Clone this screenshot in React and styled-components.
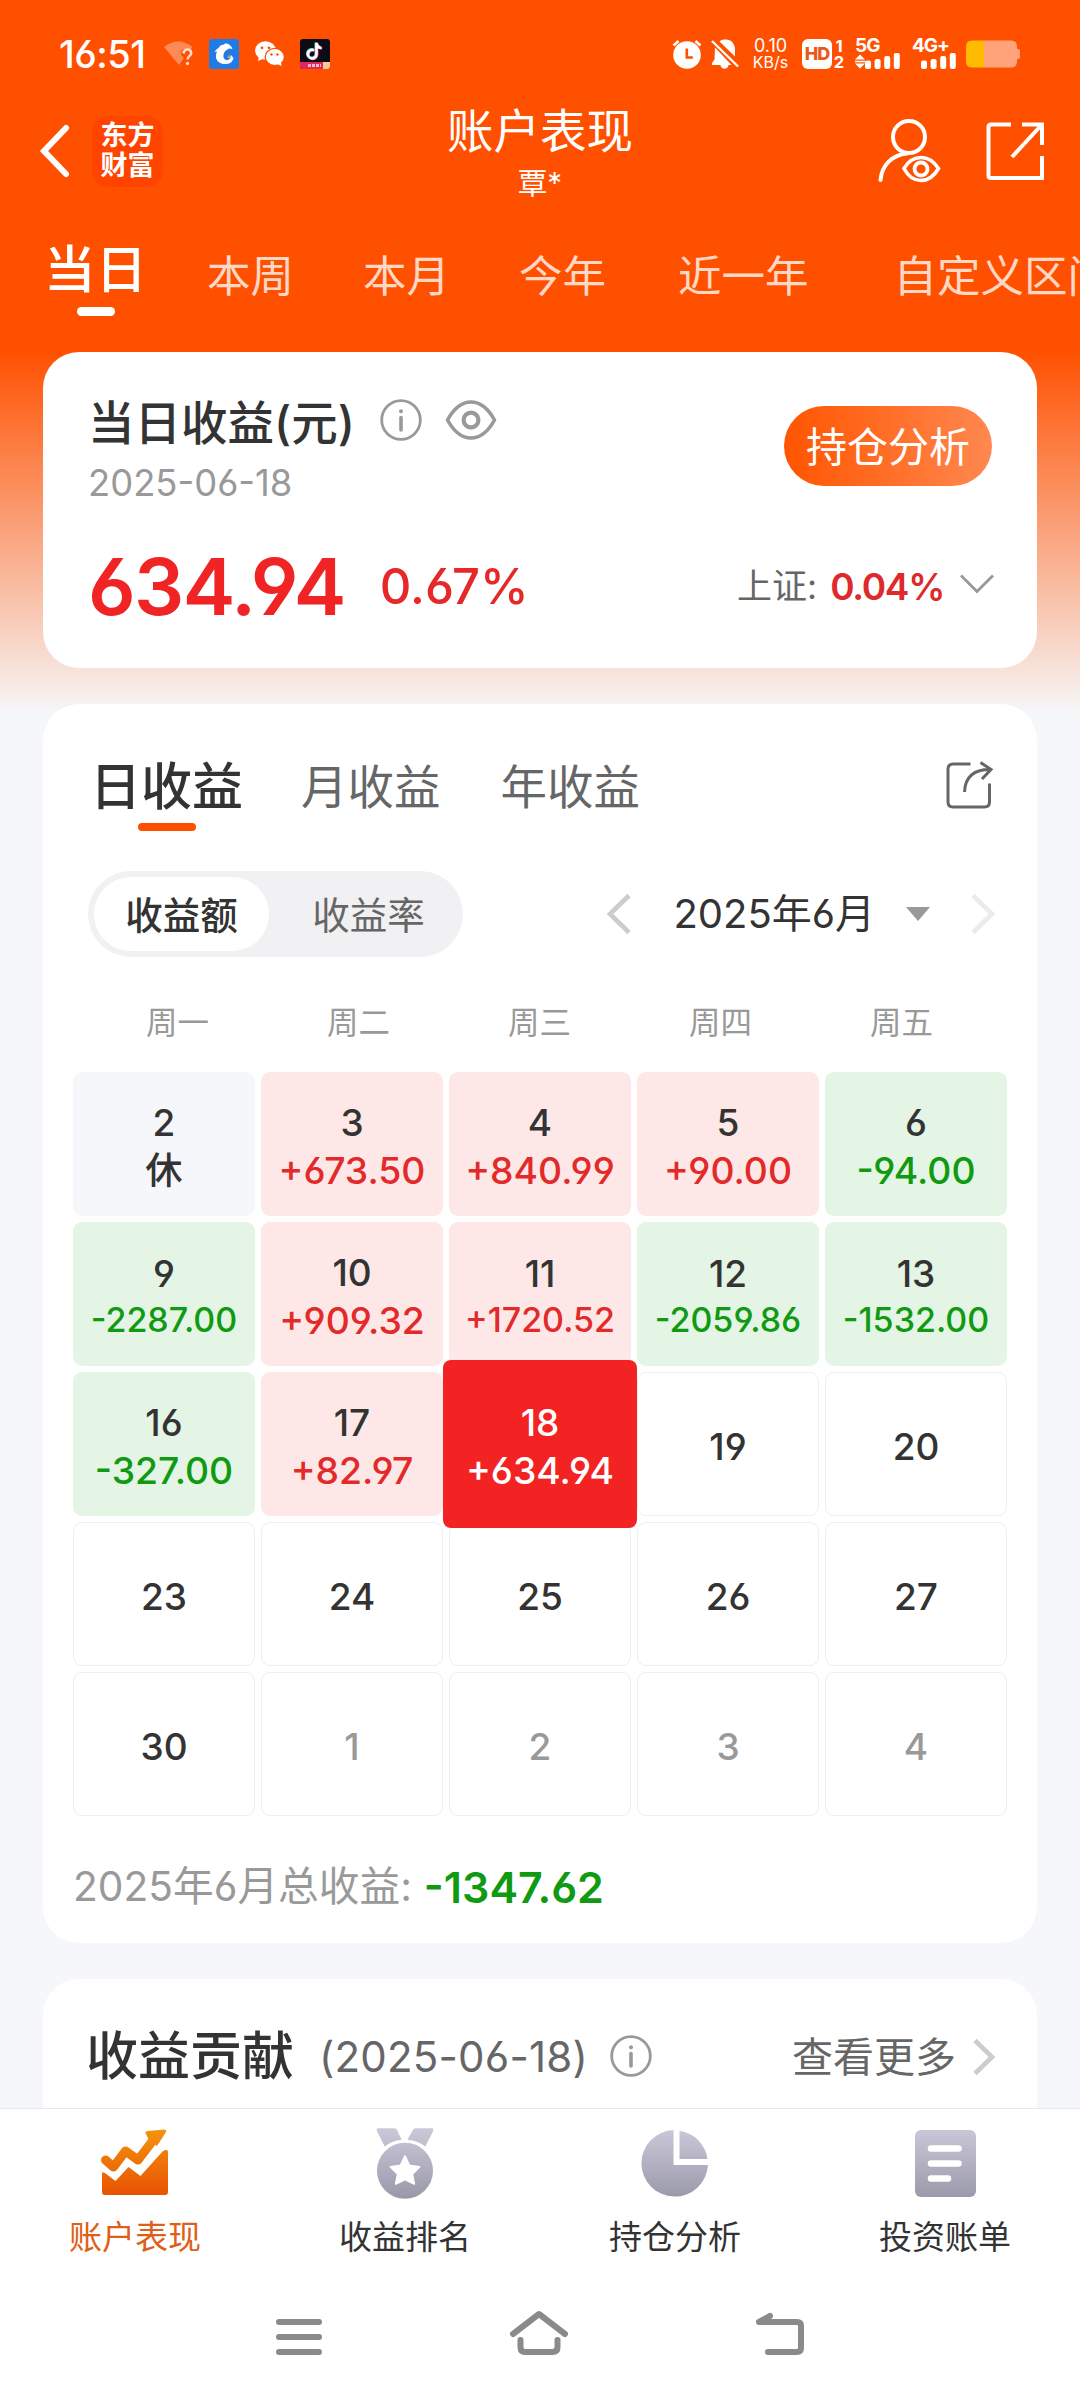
import React from "react";
import styled, { createGlobalStyle, css } from "styled-components";

const GlobalStyle = createGlobalStyle`
  * { box-sizing: border-box; }
  body {
    margin: 0;
    font-family: Inter, "Noto Sans CJK SC", sans-serif;
    font-feature-settings: "cv03", "cv04";
    color: #333;
  }
  svg { display: block; flex: none; overflow: visible; }
`;

const Page = styled.div`
  width: 1080px;
  height: 2400px;
  display: flex;
  flex-direction: column;
  overflow: hidden;
  background: linear-gradient(#ff5000 0, #ff5000 350px, #f6f7fa 716px);
`;

const Text = styled.span`
  display: block;
  white-space: nowrap;
  font-size: ${(p) => p.$size}px;
  line-height: ${(p) => p.$line || p.$size}px;
  font-weight: ${(p) => p.$weight || 400};
  color: ${(p) => p.$color || "inherit"};
  letter-spacing: ${(p) => p.$space || 0}px;
  margin-left: ${(p) => p.$left || 0}px;
`;

/* ---------- status bar ---------- */
const StatusBar = styled.div`
  height: 108px;
  padding: 0 60px 0 59px;
  display: flex;
  align-items: center;
  justify-content: space-between;
  color: #fff;
`;
const StatusGroup = styled.div`
  display: flex;
  align-items: center;
  height: 30px;
`;
const SpeedBox = styled.div`
  width: 37px;
  margin: 0 13px 0 13px;
  display: flex;
  flex-direction: column;
  align-items: center;
`;
const HdBox = styled.div`
  width: 30px;
  height: 30px;
  border-radius: 6px;
  background: #fff;
  color: #e85a1c;
  display: flex;
  align-items: center;
  justify-content: center;
`;
const SimNumbers = styled.div`
  width: 14px;
  margin-right: 9px;
  display: flex;
  flex-direction: column;
  align-items: center;
`;
const SignalBox = styled.div`
  width: ${(p) => p.$width}px;
  height: 30px;
  display: flex;
  flex-direction: column;
  justify-content: space-between;
`;

/* ---------- nav bar ---------- */
const NavBar = styled.div`
  height: 98px;
  display: grid;
  grid-template-columns: 1fr 300px 1fr;
  color: #fff;
`;
const NavSide = styled.div`
  height: 86px;
  display: flex;
  align-items: center;
  justify-content: ${(p) => (p.$right ? "flex-end" : "flex-start")};
  gap: ${(p) => (p.$right ? 46 : 22)}px;
  padding: ${(p) => (p.$right ? "0 36px 0 0" : "0 0 0 40px")};
`;
const NavTitle = styled.div`
  display: flex;
  flex-direction: column;
  align-items: center;
`;
const Logo = styled.div`
  width: 71px;
  height: 71px;
  border-radius: 16px;
  background: #ff4400;
  display: flex;
  flex-direction: column;
  align-items: center;
  justify-content: center;
`;

const RangeTabs = styled.div`
  height: 146px;
  display: flex;
  padding-left: 44px;
  overflow: hidden;
  color: #ffd8c5;
`;
const RangeTab = styled.div`
  flex: none;
  margin-right: ${(p) => p.$gap}px;
  padding-top: ${(p) => (p.$active ? 37 : 44)}px;
  display: flex;
  flex-direction: column;
  align-items: center;
  ${(p) => p.$active && css`color: #fff;`}
`;
const Underline = styled.i`
  width: ${(p) => p.$width}px;
  height: ${(p) => p.$height}px;
  border-radius: 5px;
  background: ${(p) => p.$color};
  margin-top: ${(p) => p.$top}px;
`;

/* ---------- cards ---------- */
const Main = styled.div`
  flex: 1;
  min-height: 0;
  overflow: hidden;
  padding: 0 43px;
  display: flex;
  flex-direction: column;
  gap: 36px;
`;
const Card = styled.section`
  flex: none;
  height: ${(p) => p.$height}px;
  background: #fff;
  border-radius: 36px;
  padding: ${(p) => p.$pad};
`;
const Row = styled.div`
  display: flex;
  align-items: ${(p) => p.$align || "center"};
  justify-content: ${(p) => (p.$between ? "space-between" : "flex-start")};
  height: ${(p) => p.$height}px;
  gap: ${(p) => p.$gap || 0}px;
  padding: ${(p) => p.$pad || 0};
`;
const Stack = styled.div`
  display: flex;
  flex-direction: column;
`;
const PillButton = styled.button`
  width: 208px;
  height: 80px;
  padding: 2px 0 0;
  border: 0;
  border-radius: 40px;
  margin-top: 10px;
  background: linear-gradient(90deg, #ff5500, #ff8850);
  color: #fff;
  font-family: inherit;
  display: flex;
  align-items: center;
  justify-content: center;
`;

const ProfitTab = styled.div`
  display: flex;
  flex-direction: column;
  align-items: center;
  margin-right: ${(p) => p.$gap}px;
  color: ${(p) => (p.$active ? "#333" : "#666")};
`;
const Segment = styled.div`
  width: 375px;
  height: 86px;
  padding: 6px;
  border-radius: 43px;
  background: #f1f1f4;
  display: flex;
`;
const SegmentItem = styled.div`
  flex: none;
  width: ${(p) => (p.$active ? 175 : 199)}px;
  padding-top: 3px;
  border-radius: 37px;
  display: flex;
  align-items: center;
  justify-content: center;
  background: ${(p) => (p.$active ? "#fff" : "transparent")};
  color: ${(p) => (p.$active ? "#333" : "#666")};
`;
const WeekRow = styled.div`
  height: 115px;
  padding: 49px 15px 0 14px;
  display: grid;
  grid-template-columns: repeat(5, 1fr);
  justify-items: center;
  color: #999;
`;
const Calendar = styled.div`
  display: grid;
  grid-template-columns: repeat(5, 182px);
  grid-auto-rows: 144px;
  gap: 6px;
`;

const cellKinds = {
  rest: css`background: #f6f7fa;`,
  up: css`background: #fde8e7; --amount: #e22a2a;`,
  down: css`background: #e4f4e5; --amount: #109a12;`,
  none: css`border: 1px solid #eee;`,
  other: css`border: 1px solid #eee; color: #999;`,
  today: css`
    background: #f32323;
    color: #fff;
    --amount: #fff;
    margin: -12px -6px;
    z-index: 1;
    border-radius: 8px;
  `,
};
const Cell = styled.div`
  border-radius: 9px;
  padding-top: 5px;
  display: flex;
  flex-direction: column;
  align-items: center;
  justify-content: center;
  color: #333;
  ${(p) => cellKinds[p.$kind]}
`;
const Amount = styled(Text)`
  color: var(--amount, #333);
`;

/* ---------- bottom ---------- */
const BottomTabs = styled.nav`
  height: 172px;
  flex: none;
  background: #fff;
  border-top: 1px solid #e9e9eb;
  display: grid;
  grid-template-columns: repeat(4, 1fr);
`;
const BottomTab = styled.div`
  display: flex;
  flex-direction: column;
  align-items: center;
  padding-top: 17px;
  color: ${(p) => (p.$active ? "#df5f18" : "#333")};
`;
const SystemBar = styled.div`
  height: 120px;
  flex: none;
  background: #fff;
  display: flex;
  justify-content: center;
  padding-top: 30px;
  gap: 188px;
`;

const Chevron = ({ w, h, d, color, stroke, cap = "butt" }) => (
  <svg width={w} height={h} viewBox={`0 0 ${w} ${h}`} fill="none" stroke={color} strokeWidth={stroke} strokeLinecap={cap}>
    <path d={d} />
  </svg>
);

const InfoIcon = () => (
  <svg width="42" height="42" viewBox="0 0 42 42" fill="none" stroke="#999" strokeWidth="2.8">
    <circle cx="21" cy="21" r="19.3" />
    <path d="M21 18.5V31" strokeWidth="3.6" strokeLinecap="round" />
    <circle cx="21" cy="12.3" r="2" fill="#999" stroke="none" />
  </svg>
);

const EyeIcon = () => (
  <svg width="52" height="40" viewBox="0 0 52 40" fill="none" stroke="#999" strokeWidth="3.6">
    <path d="M2.5 20C8 10 16 2 26 2s18 8 23.500 18C44 30 36 38 26 38S8 30 2.500 20Z" strokeLinejoin="round" />
    <circle cx="26" cy="20" r="7.400" strokeWidth="4.200" />
  </svg>
);

const WifiIcon = () => (
  <svg width="29" height="26" viewBox="0 0 29 26">
    <path d="M0 6Q14 -5 28.500 6L26 9Q17 5 17 14L20 17L15 24Z" fill="#ff8a57" />
    <path d="M19.500 12.500q.5-4 4-4t3.700 3.700c0 2.500-3.700 3-3.700 6.300" fill="none" stroke="#ffd9c6" strokeWidth="2.600" />
    <circle cx="23.500" cy="22.500" r="1.700" fill="#ffd9c6" />
  </svg>
);

const DolphinIcon = () => (
  <svg width="30" height="30" viewBox="0 0 30 30">
    <rect width="30" height="30" rx="3" fill="#217be6" />
    <path d="M23.500 10L20 9.500Q16 11.500 15 14Q13.500 18 15.500 20Q18 22.500 21 19.500L22 16L24.500 19Q23.500 24.500 17.500 25Q9 25.500 7 19Q6.500 15 8 12.500L5.500 13Q7 10 10 8.500Q10.500 6 15 5.500L16 4.500Q21 4 23.500 10Z" fill="#fff" />
    <path d="M18 18.500l2.500-3 1 4z" fill="#d59a72" />
  </svg>
);

const WechatIcon = () => (
  <svg width="29" height="26" viewBox="0 0 29 26">
    <ellipse cx="10.500" cy="9.500" rx="10.500" ry="9.300" fill="#fff" />
    <path d="M4 15l-1 5 6-2.500z" fill="#fff" />
    <ellipse cx="19.800" cy="16" rx="9.600" ry="8.600" fill="#fff" stroke="#ff5000" strokeWidth="1.300" />
    <path d="M22 23l4.500 2-.7-4.500z" fill="#fff" />
    <g fill="#ff5000">
      <circle cx="7" cy="6.800" r="1.400" />
      <circle cx="14" cy="6.800" r="1.400" />
      <circle cx="16.500" cy="13.500" r="1.200" />
      <circle cx="22.500" cy="13.500" r="1.200" />
    </g>
  </svg>
);

const TiktokIcon = () => (
  <svg width="30" height="30" viewBox="0 0 30 30">
    <rect width="30" height="30" rx="3" fill="#0c0b16" />
    <path d="M0 23h30v4q0 3-3 3H3q-3 0-3-3z" fill="#e0275a" />
    <path d="M23 23h7v4q0 3-3 3h-4z" fill="#f6c99a" />
    <path d="M8 26.500h13" stroke="#f7b9cc" strokeWidth="3" strokeDasharray="3 1" />
    <g fill="none" strokeWidth="2.600">
      <path d="M13.300 10.700a4.300 4.300 0 1 0 2.500 4V3.500q.5 4.500 5 5" stroke="#3be3e0" />
      <path d="M14.700 11.700a4.300 4.300 0 1 0 2.500 4V4.500q.5 4.500 5 5" stroke="#f7446e" />
      <path d="M14 11.200a4.300 4.300 0 1 0 2.500 4V4q.5 4.500 5 5" stroke="#fff" />
    </g>
  </svg>
);

const AlarmIcon = () => (
  <svg width="30" height="30" viewBox="0 0 30 30">
    <circle cx="15" cy="16" r="13.800" fill="#fff" />
    <path d="M1.500 6.500l5-4.500M28.500 6.500l-5-4.500" stroke="#fff" strokeWidth="2.600" />
    <path d="M14.800 9.500v9h6" stroke="#ff5000" strokeWidth="2.600" fill="none" />
  </svg>
);

const BellOffIcon = () => (
  <svg width="28" height="30" viewBox="0 0 28 30">
    <path d="M8.500 2.500C10 1 11.500 .5 15 .5c5 0 9 4 9 10v7zM4 8.500L20.500 26H17.500c-.5 5-7.500 5-8 0H1v-2l2.500-3.500z" fill="#fff" />
    <path d="M1 2l26 25.500" stroke="#fff" strokeWidth="2.400" />
  </svg>
);

const Bars = ({ arrows }) => (
  <svg width={arrows ? 45 : 35} height="16" viewBox={arrows ? "-10 0 45 16" : "0 0 35 16"} fill="#fff">
    {arrows && <path d="M-10 6.500l5-5 5 5zM-10 10.500l5 5 5-5zM-10 7.800h10v1.500h-10z" />}
    <rect x="0" y="7.500" width="6" height="8.500" rx="2" />
    <rect x="9.600" y="6" width="6" height="10" rx="2" />
    <rect x="19.200" y="3" width="6" height="13" rx="2" />
    <rect x="28.800" y="0" width="6" height="16" rx="2" />
  </svg>
);

const BatteryIcon = () => (
  <svg width="54" height="28" viewBox="0 0 54 28">
    <path d="M18 0.500h27q6 0 6 6v2.500h1q2 0 2 2v6q0 2-2 2h-1v2.500q0 6-6 6H18z" fill="#ffa37b" />
    <path d="M18 .5H6q-6 0-6 6v15q0 6 6 6h12z" fill="#ffbb00" />
  </svg>
);

const UserEyeIcon = () => (
  <svg width="63" height="64" viewBox="0 0 63 64" fill="none" stroke="#fff" strokeWidth="4">
    <circle cx="32" cy="18" r="16" />
    <path d="M30 34.500C15 36 5 46 3.500 61" strokeLinecap="round" />
    <path d="M27 49.500C32 41 38 38.500 44 38.500S56 41 61.500 49.500C56 59 50 61.500 44 61.500S32 59 27 49.500Z" fill="#ff5000" strokeWidth="3.600" />
    <circle cx="44" cy="50" r="6.500" strokeWidth="3.800" />
  </svg>
);

const OpenIcon = () => (
  <svg width="58" height="60" viewBox="0 0 58 60" fill="none" stroke="#fff" strokeWidth="4">
    <path d="M25 3.500H5Q2.500 3.500 2.500 6V54.500Q2.500 57 5 57H56V35" />
    <path d="M36 3.500H56V24M55 4.500L26 36" />
  </svg>
);

const ShareIcon = () => (
  <svg width="46" height="48" viewBox="0 0 46 48" fill="none" stroke="#666" strokeWidth="3">
    <path d="M24.500 3H7Q2 3 2 8V41Q2 46 7 46H38.500Q43.500 46 43.500 41V22.500" />
    <path d="M18.500 31C19 17 27 8.500 44 8.500M34.500 1.500L45 8.500L36 18" />
  </svg>
);

const ChartTabIcon = () => (
  <svg width="68" height="76" viewBox="0 0 68 76">
    <defs>
      <linearGradient id="hot" gradientUnits="userSpaceOnUse" x1="0" y1="4" x2="0" y2="70">
        <stop stopColor="#f4930c" />
        <stop offset="1" stopColor="#e85204" />
      </linearGradient>
    </defs>
    <path d="M4.500 34L12.500 41L24.500 25L37 34L53 13" fill="none" stroke="url(#hot)" strokeWidth="9" strokeLinejoin="round" strokeLinecap="round" />
    <path d="M45 8Q43 5.500 47 5L63 3.500Q66 3.500 65 6L56 20L48 14Z" fill="url(#hot)" />
    <path d="M1 48Q1 45 4 47L14.500 55L27.500 41L39.500 50L61 26Q67 21 67 27V66Q67 69 64 69H4Q1 69 1 66Z" fill="url(#hot)" />
  </svg>
);

const coolFill = (id) => (
  <defs>
    <linearGradient id={id} gradientUnits="userSpaceOnUse" x1="0" y1="0" x2="0" y2="74">
      <stop stopColor="#cccada" />
      <stop offset="1" stopColor="#9998a9" />
    </linearGradient>
  </defs>
);

const MedalTabIcon = () => (
  <svg width="58" height="76" viewBox="0 0 60 76">
    {coolFill("cool1")}
    <path d="M2 1H19Q21 1 22 3L26.500 13Q16 14 9 20L1 4Q0 1 2 1ZM58 1H41Q39 1 38 3L32.500 13Q44 14 51 20L59 4Q60 1 58 1Z" fill="url(#cool1)" />
    <circle cx="30" cy="45" r="29" fill="url(#cool1)" />
    <path d="M30 30L34.500 39.500L45 41L37.500 48.500L39.500 58.500L30 54L20.500 58.500L22.500 48.500L15 41L25.500 39.500Z" fill="#fff" stroke="#fff" strokeWidth="2" strokeLinejoin="round" />
  </svg>
);

const PieTabIcon = () => (
  <svg width="68" height="76" viewBox="0 0 68 76">
    {coolFill("cool2")}
    <path d="M32.500 4A33.300 33.300 0 1 0 67 39H32.500Z" fill="url(#cool2)" />
    <path d="M38.500 4.800A33 33 0 0 1 66.500 33H38.500Z" fill="url(#cool2)" />
  </svg>
);

const BillTabIcon = () => (
  <svg width="61" height="76" viewBox="0 0 61 76">
    {coolFill("cool3")}
    <rect x="0" y="4" width="61" height="67" rx="6" fill="url(#cool3)" />
    <path d="M16 22.500H43.500M16 37.500H43.500M16 52.500H33" stroke="#fff" strokeWidth="6.500" strokeLinecap="round" />
  </svg>
);

const ranges = [
  { name: "当日", gap: 60, active: true },
  { name: "本周", gap: 69 },
  { name: "本月", gap: 69 },
  { name: "今年", gap: 72 },
  { name: "近一年", gap: 85 },
  { name: "自定义区间", gap: 0 },
];

const days = [
  ["2", "rest", "休"],
  ["3", "up", "+673.50"],
  ["4", "up", "+840.99"],
  ["5", "up", "+90.00"],
  ["6", "down", "-94.00"],
  ["9", "down", "-2287.00"],
  ["10", "up", "+909.32"],
  ["11", "up", "+1720.52"],
  ["12", "down", "-2059.86"],
  ["13", "down", "-1532.00"],
  ["16", "down", "-327.00"],
  ["17", "up", "+82.97"],
  ["18", "today", "+634.94"],
  ["19", "none"],
  ["20", "none"],
  ["23", "none"],
  ["24", "none"],
  ["25", "none"],
  ["26", "none"],
  ["27", "none"],
  ["30", "none"],
  ["1", "other"],
  ["2", "other"],
  ["3", "other"],
  ["4", "other"],
];

const bottomTabs = [
  { name: "账户表现", icon: <ChartTabIcon />, active: true },
  { name: "收益排名", icon: <MedalTabIcon /> },
  { name: "持仓分析", icon: <PieTabIcon /> },
  { name: "投资账单", icon: <BillTabIcon /> },
];

const DayCell = ({ day, kind, amount }) => {
  const long = amount && amount.length > 7;
  return (
    <Cell $kind={kind}>
      <Text $size={37} $line={long ? 46 : 48} $weight={500}>{day}</Text>
      {amount && (
        <Amount $size={long ? 34 : 37.3} $line={long ? 45 : 48} $weight={500}>{amount}</Amount>
      )}
    </Cell>
  );
};

const Header = () => (
  <>
    <StatusBar>
      <StatusGroup>
        <Text $size={38} $weight={500} $space={-0.5}>16:51</Text>
        <Row $gap={16} $height={30} $pad="0 0 0 18px">
          <WifiIcon />
          <DolphinIcon />
          <WechatIcon />
          <TiktokIcon />
        </Row>
      </StatusGroup>
      <StatusGroup>
        <Row $gap={9} $height={30}>
          <AlarmIcon />
          <BellOffIcon />
        </Row>
        <SpeedBox>
          <Text $size={18} $line={16}>0.10</Text>
          <Text $size={16} $line={16}>KB/s</Text>
        </SpeedBox>
        <HdBox><Text $size={18} $weight={800} $space={-1}>HD</Text></HdBox>
        <SimNumbers>
          <Text $size={16.5} $line={16} $weight={700}>1</Text>
          <Text $size={16.5} $line={16} $weight={700}>2</Text>
        </SimNumbers>
        <SignalBox $width={57}>
          <Text $size={19} $line={14} $weight={700} $space={-1}>5G</Text>
          <Bars arrows />
        </SignalBox>
        <SignalBox $width={54}>
          <Text $size={19} $line={14} $weight={700} $space={-1}>4G+</Text>
          <Row $pad="0 0 0 9px"><Bars /></Row>
        </SignalBox>
        <BatteryIcon />
      </StatusGroup>
    </StatusBar>
    <NavBar>
      <NavSide>
        <Chevron w={30} h={54} d="M26 4L4 27L26 50" color="#fff" stroke={6} cap="round" />
        <Logo>
          <Text $size={27} $line={30} $weight={700}>东方</Text>
          <Text $size={27} $line={30} $weight={700}>财富</Text>
        </Logo>
      </NavSide>
      <NavTitle>
        <Text $size={46.5} $line={47}>账户表现</Text>
        <Text $size={29.5} $line={57}>覃*</Text>
      </NavTitle>
      <NavSide $right>
        <UserEyeIcon />
        <OpenIcon />
      </NavSide>
    </NavBar>
    <RangeTabs>
      {ranges.map((r) => (
        <RangeTab key={r.name} $active={r.active} $gap={r.gap}>
          <Text $size={r.active ? 51.5 : 43.5} $line={52} $weight={r.active ? 500 : 400}>{r.name}</Text>
          {r.active && <Underline $width={38} $height={9} $top={12} $color="#fff" />}
        </RangeTab>
      ))}
    </RangeTabs>
  </>
);

const TodayCard = () => (
  <Card $height={316} $pad="42px 43px 0 45px">
    <Row $between $align="flex-start" $height={108} $pad="2px 2px 0 0">
      <Stack>
        <Row $height={54}>
          <Text $size={46.5} $line={54} $weight={500}>当日收益(元)</Text>
          <Row $gap={23} $height={42} $pad="0 0 6px 25px">
            <InfoIcon />
            <EyeIcon />
          </Row>
        </Row>
        <Text $size={36.4} $line={66} $color="#999">2025-06-18</Text>
      </Stack>
      <PillButton><Text $size={41}>持仓分析</Text></PillButton>
    </Row>
    <Row $between $height={168}>
      <Row $height={60}>
        <Text $size={79} $weight={600} $space={-1.6} $color="#f02424">634.94</Text>
        <Text $size={49} $weight={500} $color="#e62828" $left={35}>0.67%</Text>
      </Row>
      <Row $height={60}>
        <Text $size={35} $color="#666">上证:</Text>
        <Text $size={37} $weight={600} $space={-1.3} $color="#de2a2a" $left={13}>0.04%</Text>
        <Row $pad="0 0 4px 16px">
          <Chevron w={34} h={20} d="M1 1.500L17 17.500L33 1.500" color="#999" stroke={2.8} />
        </Row>
      </Row>
    </Row>
  </Card>
);

const CalendarCard = () => (
  <Card $height={1239} $pad="0 30px">
    <Row $between $align="flex-start" $height={167} $pad="57px 15px 0 17px">
      <Row $align="flex-start">
        <ProfitTab $active $gap={58}>
          <Text $size={51} $line={52} $weight={500}>日收益</Text>
          <Underline $width={58} $height={8} $top={10} $color="#ff5000" />
        </ProfitTab>
        <ProfitTab $gap={60}><Text $size={46.5} $line={52}>月收益</Text></ProfitTab>
        <ProfitTab $gap={0}><Text $size={46.5} $line={52}>年收益</Text></ProfitTab>
      </Row>
      <ShareIcon />
    </Row>
    <Row $between $height={86} $pad="0 12px 0 15px">
      <Segment>
        <SegmentItem $active><Text $size={37.5} $weight={500}>收益额</Text></SegmentItem>
        <SegmentItem><Text $size={37.5}>收益率</Text></SegmentItem>
      </Segment>
      <Row>
        <Chevron w={24} h={40} d="M22 1.500L3 20L22 38.500" color="#ccc" stroke={4.6} />
        <Text $size={40} $line={42} $left={42}>2025年6月</Text>
        <Row $pad="0 0 0 31px">
          <svg width="24" height="14" viewBox="0 0 24 14"><path d="M0 0H24L12 14Z" fill="#999" /></svg>
        </Row>
        <Row $pad="0 0 0 41px">
          <Chevron w={24} h={40} d="M2 1.500L21 20L2 38.500" color="#ebebeb" stroke={4.600} />
        </Row>
      </Row>
    </Row>
    <WeekRow>
      {["周一", "周二", "周三", "周四", "周五"].map((w) => (
        <Text key={w} $size={31.5} $line={34}>{w}</Text>
      ))}
    </WeekRow>
    <Calendar>
      {days.map(([day, kind, amount]) => (
        <DayCell key={kind + day} day={day} kind={kind} amount={amount} />
      ))}
    </Calendar>
    <Row $height={142}>
      <Text $size={40.7} $color="#999">2025年6月总收益:</Text>
      <Text $size={43} $weight={600} $color="#109a12" $left={12}>-1347.62</Text>
    </Row>
  </Card>
);

const ContributionCard = () => (
  <Card $height={200} $pad="50px 42px 0 43px">
    <Row $between $height={56}>
      <Row>
        <Text $size={52} $weight={500}>收益贡献</Text>
        <Text $size={42} $space={0.2} $color="#666" $left={25}>(2025-06-18)</Text>
        <Row $pad="0 0 2px 22px"><InfoIcon /></Row>
      </Row>
      <Row $gap={17}>
        <Text $size={41} $color="#666">查看更多</Text>
        <Chevron w={22} h={36} d="M2 1.500L19 18L2 34.500" color="#ccc" stroke={4.600} />
      </Row>
    </Row>
  </Card>
);

export default function App() {
  return (
    <Page>
      <GlobalStyle />
      <Header />
      <Main>
        <TodayCard />
        <CalendarCard />
        <ContributionCard />
      </Main>
      <BottomTabs>
        {bottomTabs.map((t) => (
          <BottomTab key={t.name} $active={t.active}>
            {t.icon}
            <Text $size={33} $line={71}>{t.name}</Text>
          </BottomTab>
        ))}
      </BottomTabs>
      <SystemBar>
        <svg width="46" height="46" viewBox="0 0 46 46" stroke="#8a8a8a" strokeWidth="6" strokeLinecap="round">
          <path d="M3 12H43M3 27H43M3 42H43" />
        </svg>
        <svg width="58" height="46" viewBox="0 0 58 46" fill="none" stroke="#8a8a8a" strokeWidth="6" strokeLinecap="round" strokeLinejoin="round">
          <path d="M3 24L29 4L55 24M10.500 30V37Q10.500 42 15 42H42.500Q47.500 42 47.500 37V30" />
        </svg>
        <svg width="48" height="46" viewBox="0 0 48 46" fill="none" stroke="#8a8a8a" strokeWidth="6" strokeLinecap="round" strokeLinejoin="round">
          <path d="M14 6L3 12H41Q45 12 45 16V38Q45 42 41 42H12" />
        </svg>
      </SystemBar>
    </Page>
  );
}
